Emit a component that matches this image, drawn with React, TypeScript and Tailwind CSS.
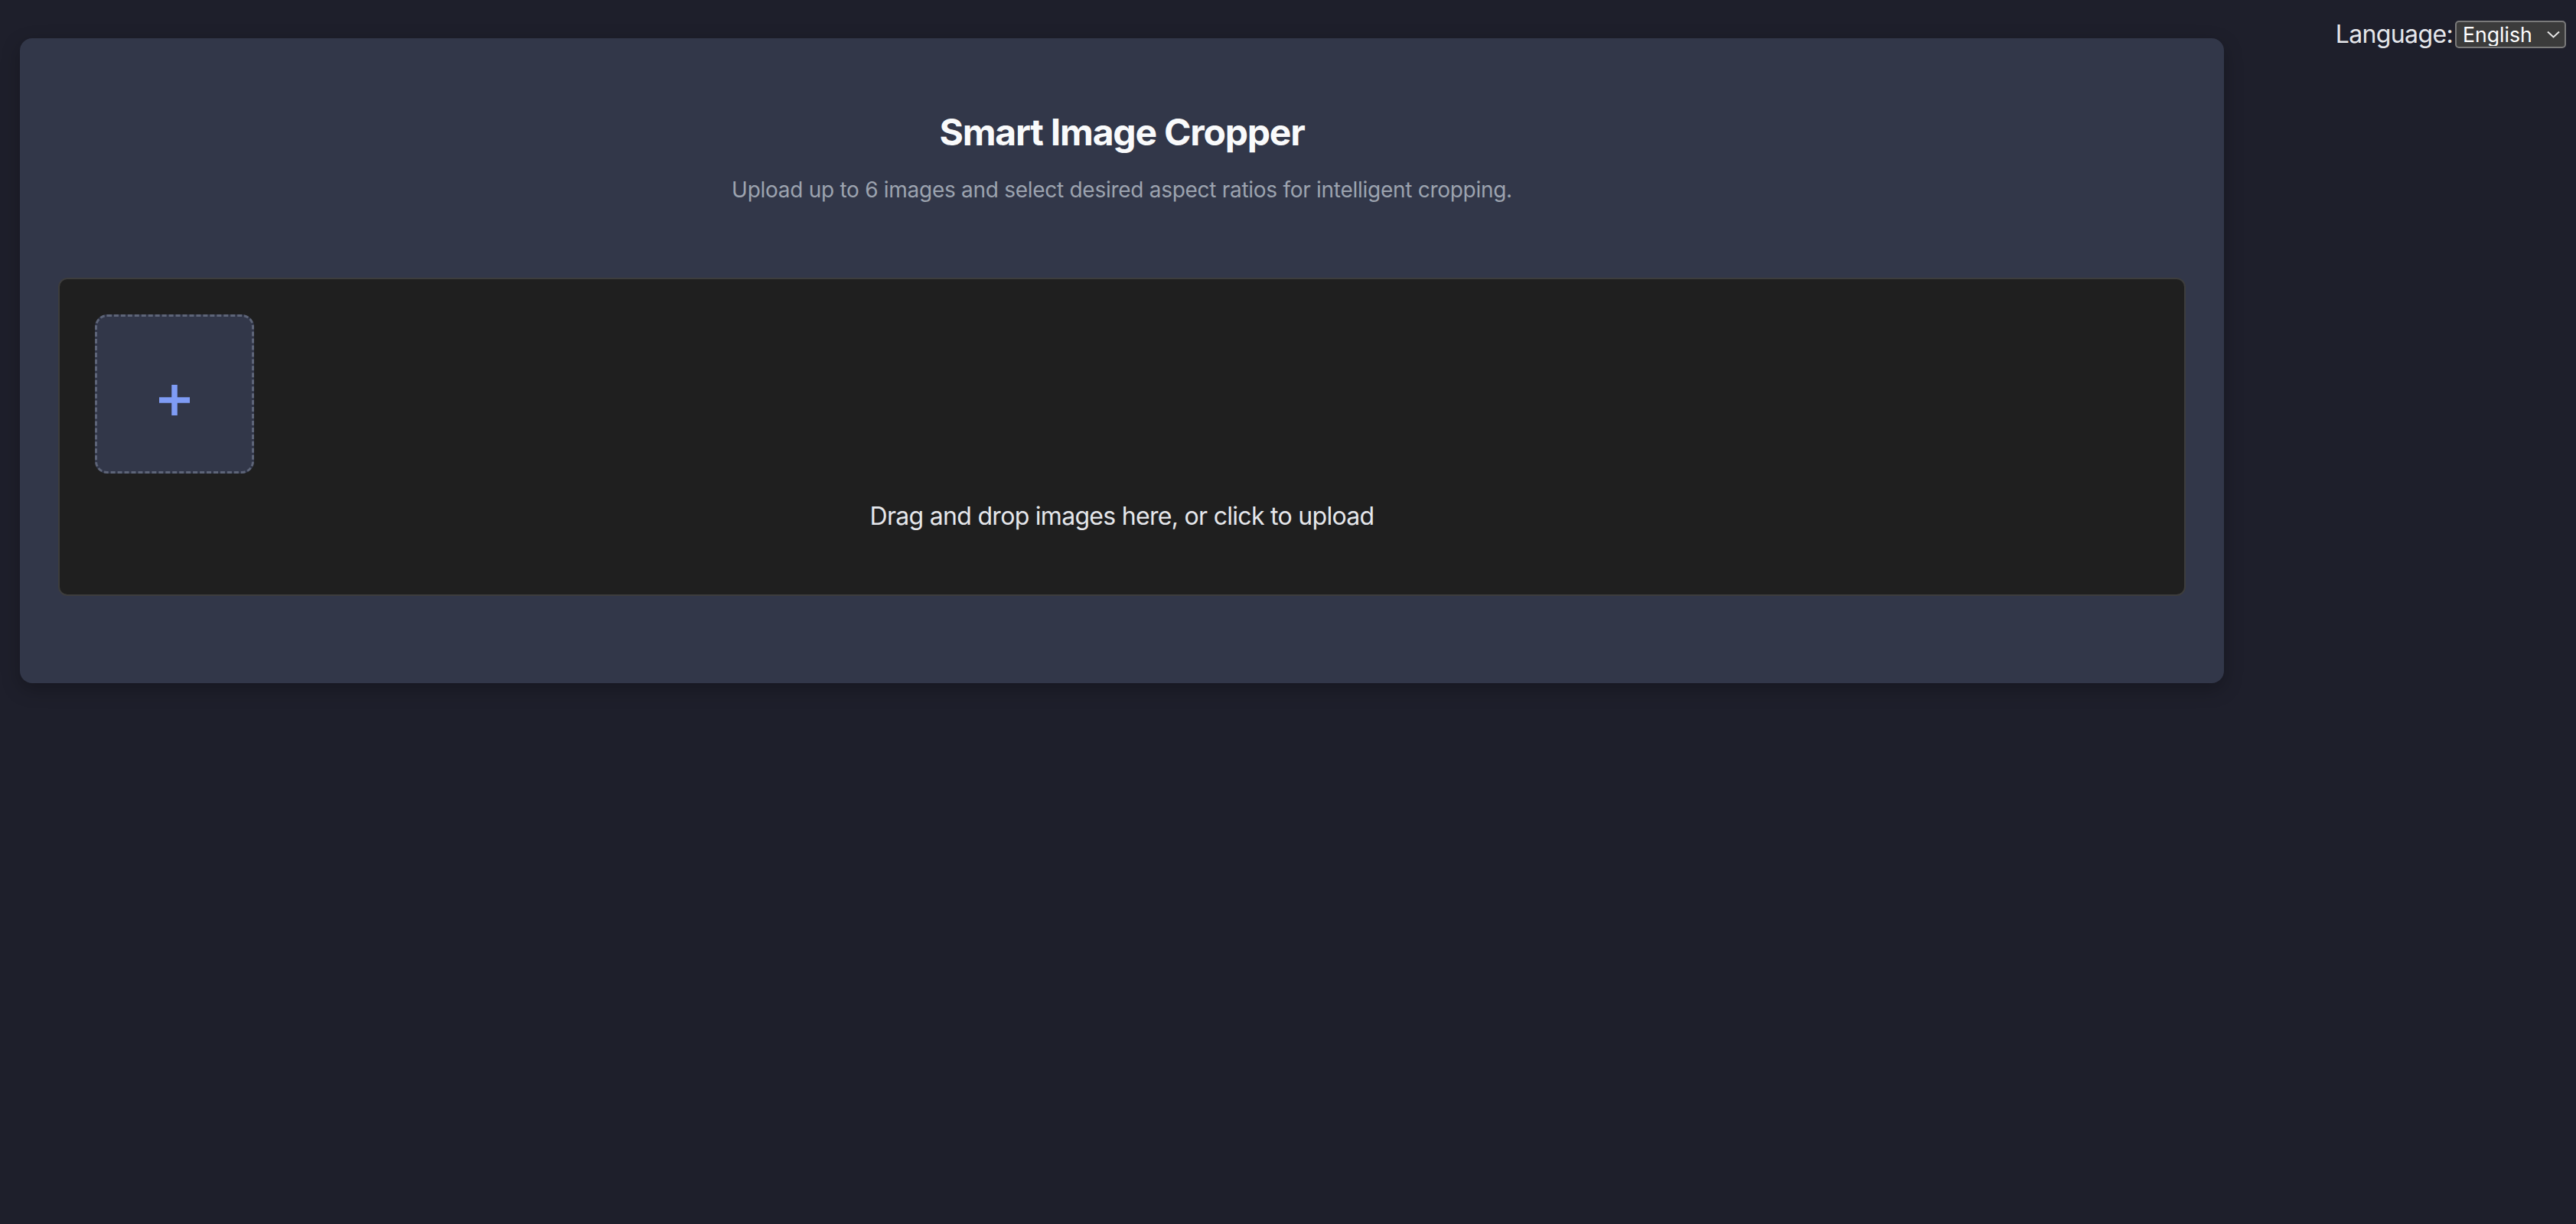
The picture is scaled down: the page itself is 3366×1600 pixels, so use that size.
import { useState } from "react";

function PlusTile() {
  return (
    <button
      type="button"
      className="flex h-[208px] w-[208px] items-center justify-center rounded-[16px] border-[3px] border-dashed border-[#5e6579] bg-[#323749]"
    >
      <svg width="40" height="40" viewBox="0 0 40 40" className="mt-[15px]">
        <path d="M20 0v40M0 20h40" stroke="#7f9cf5" strokeWidth="7.5" />
      </svg>
    </button>
  );
}

function LanguagePicker() {
  const [lang, setLang] = useState("en");
  return (
    <div className="mr-[13px] mt-[27px] flex items-center">
      <span className="text-[32px] leading-[36px] tracking-[-0.02em] text-[#e5e7eb]">Language:</span>
      <div className="relative ml-[3px]">
        <select
          value={lang}
          onChange={(e) => setLang(e.target.value)}
          className="h-[36px] w-[145px] appearance-none rounded-[5px] border-2 border-[#7a7a7a] bg-[#3b3b3b] pl-[8px] text-[26.67px] leading-[30px] text-white outline-none"
        >
          <option value="en">English</option>
          <option value="zh">中文</option>
        </select>
        {/* chevron */}
        <svg
          width="17"
          height="10"
          viewBox="0 0 17 10"
          className="pointer-events-none absolute right-[8px] top-[13px]"
        >
          <path d="M1 1.5l7.5 7 7.5-7" fill="none" stroke="#e5e5e5" strokeWidth="2" />
        </svg>
      </div>
    </div>
  );
}

export default function App() {
  return (
    <div className="flex min-h-screen items-start justify-between bg-[#1e1f2b] font-['Inter','Noto_Sans',sans-serif]">
      <main className="ml-[26px] mt-[50px] w-[2880px] rounded-[16px] bg-[#323749] px-[50px] pb-[114px] pt-[91px] shadow-[0_8px_24px_rgba(0,0,0,0.25)]">
        <h1 className="text-center text-[48px] font-bold leading-[64px] tracking-[-0.025em] text-[#f9fafb]">
          Smart Image Cropper
        </h1>
        <p className="mt-[23px] text-center text-[28px] leading-[40px] tracking-[-0.01em] text-[#9ca3af]">
          Upload up to 6 images and select desired aspect ratios for intelligent cropping.
        </p>

        <section className="mt-[95px] rounded-[12px] border-2 border-[#3d3d3d] bg-[#1f1f1f] px-[46px] pb-[46px] pt-[46px]">
          <div className="flex flex-wrap gap-[32px]">
            <PlusTile />
          </div>
          <p className="my-[32px] text-center text-[32px] leading-[48px] tracking-[-0.022em] text-[#e5e7eb]">
            Drag and drop images here, or click to upload
          </p>
        </section>
      </main>

      <LanguagePicker />
    </div>
  );
}
